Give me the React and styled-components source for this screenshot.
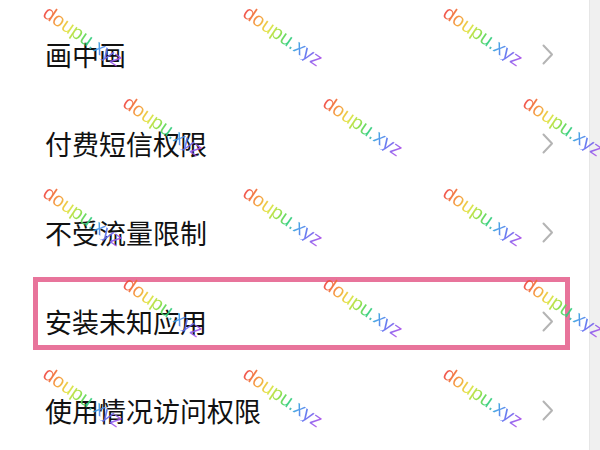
import React from 'react';
import styled, { createGlobalStyle } from 'styled-components';

const GlobalStyle = createGlobalStyle`
  html, body {
    margin: 0;
    padding: 0;
    background: #ffffff;
  }
  body {
    font-family: "Noto Sans CJK SC", "Noto Sans", sans-serif;
  }
`;

const Screen = styled.div`
  position: relative;
  width: 600px;
  height: 450px;
  overflow: hidden;
  display: flex;
  background: #ffffff;
`;

const List = styled.div`
  flex: 1;
  display: flex;
  flex-direction: column;
  padding-top: 10px;
`;

const Scrollbar = styled.div`
  width: 10px;
  background: #f0f0f0;
  border-left: 1px solid #e6e6e6;
`;

const Row = styled.div`
  position: relative;
  height: 89px;
  flex-shrink: 0;
  display: flex;
  align-items: center;
  justify-content: space-between;
  padding: 0 35px 0 45px;

  &::after {
    content: '';
    display: ${(p) => (p.$highlight ? 'block' : 'none')};
    position: absolute;
    left: 33px;
    right: 19px;
    top: 0;
    height: 73px;
    border: 5px solid #e8749b;
    box-sizing: border-box;
  }
`;

const Label = styled.span`
  font-size: 27px;
  font-weight: 400;
  color: #111111;
`;

const Chevron = () => (
  <svg width="12" height="21" viewBox="0 0 12 21">
    <polyline
      points="1.5,1.5 10,10.5 1.5,19.5"
      fill="none"
      stroke="#b4b4b4"
      strokeWidth="2"
      strokeLinecap="round"
      strokeLinejoin="round"
    />
  </svg>
);

const Watermarks = styled.div`
  position: absolute;
  inset: 0;
  pointer-events: none;
`;

const Mark = styled.span`
  position: absolute;
  font-family: "Liberation Sans", Arial, sans-serif;
  font-size: 20px;
  line-height: 1;
  transform-origin: 0 0;
  transform: rotate(34deg);
  background: linear-gradient(
    90deg,
    #ee3b3b 0%,
    #f5962e 18%,
    #e6e23a 32%,
    #86de3a 46%,
    #2fcf72 58%,
    #3a9ae6 70%,
    #5a6ef0 82%,
    #b04ae8 100%
  );
  -webkit-background-clip: text;
  background-clip: text;
  color: transparent;
  opacity: 0.9;
  white-space: nowrap;
`;

const items = ['画中画', '付费短信权限', '不受流量限制', '安装未知应用', '使用情况访问权限'];

const rowsY = [2, 92, 182, 273, 363];
const marks = [];
rowsY.forEach((y, i) => {
  const offset = i % 2 === 0 ? 51 : 131;
  [0, 200, 400].forEach((dx) => marks.push({ x: offset + dx, y }));
});

const App = () => {
  return (
    <>
      <GlobalStyle />
      <Screen>
        <List>
          {items.map((t, i) => (
            <Row key={t} $highlight={i === 3}>
              <Label>{t}</Label>
              <Chevron />
            </Row>
          ))}
        </List>
        <Scrollbar />
        <Watermarks>
          {marks.map((m, i) => (
            <Mark key={i} style={{ left: m.x, top: m.y }}>
              doupu.xyz
            </Mark>
          ))}
        </Watermarks>
      </Screen>
    </>
  );
};

export default App;
